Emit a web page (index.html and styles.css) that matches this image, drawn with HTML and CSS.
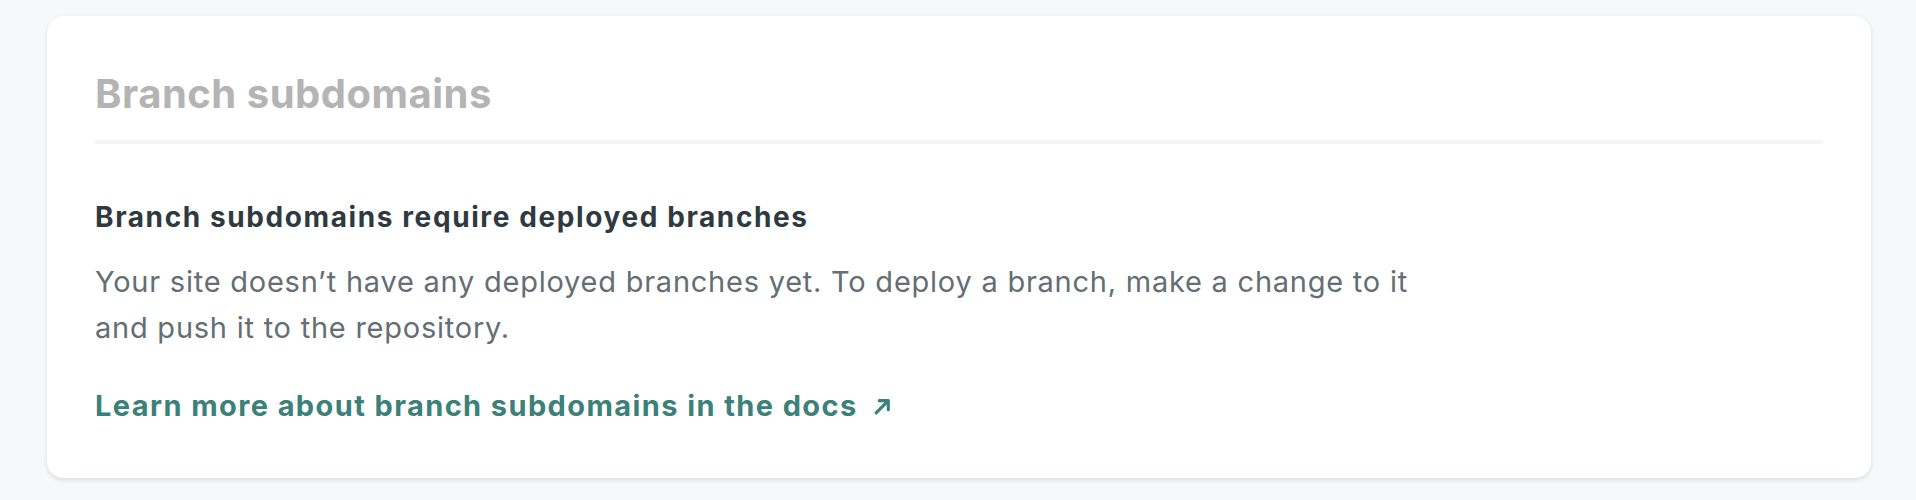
FILE: index.html
```html
<!DOCTYPE html>
<html lang="en">
<head>
<meta charset="utf-8">
<title>Branch subdomains</title>
<link rel="stylesheet" href="styles.css">
</head>
<body>
<main class="page">
  <section class="card">
    <header class="card-header">
      <h2 class="card-title">Branch subdomains</h2>
    </header>
    <div class="card-body">
      <h3 class="notice-title">Branch subdomains require deployed branches</h3>
      <p class="notice-text">Your site doesn’t have any deployed branches yet. To deploy a branch, make a change to it and push it to the repository.</p>
      <a class="docs-link" href="#">Learn more about branch subdomains in the docs<svg class="ext-icon" viewBox="0 0 18 18" width="19" height="19" aria-hidden="true"><path d="M3 15 L14.5 3.5 M6 3.5 H14.5 V12" fill="none" stroke="currentColor" stroke-width="3" stroke-linecap="round" stroke-linejoin="round"/></svg></a>
    </div>
  </section>
</main>
</body>
</html>
```

FILE: styles.css
```css
html, body {
  margin: 0;
  padding: 0;
}

body {
  background: #f6f9fa;
  font-family: Inter, "Noto Sans", "Liberation Sans", sans-serif;
  -webkit-font-smoothing: antialiased;
}

.page {
  padding: 16px 45px 20px 47px;
}

.card {
  background: #ffffff;
  border-radius: 16px;
  box-shadow: 0 2px 4px rgba(14, 30, 37, 0.12), 0 0 1px rgba(14, 30, 37, 0.06);
  padding: 54px 48px 52px;
}

.card-header {
  padding-bottom: 22px;
  border-bottom: 4px solid #f5f6f6;
}

.card-title {
  margin: 0;
  font-size: 40px;
  line-height: 48px;
  font-weight: 700;
  color: #b4b4b4;
  letter-spacing: 0.5px;
}

.card-body {
  display: flex;
  flex-direction: column;
  align-items: flex-start;
}

.notice-title {
  margin: 53px 0 0;
  font-size: 28px;
  line-height: 40px;
  font-weight: 700;
  letter-spacing: 1.6px;
  color: #2e3a40;
}

.notice-text {
  margin: 22px 0 0;
  max-width: 1340px;
  font-size: 29px;
  line-height: 46px;
  font-weight: 400;
  letter-spacing: 0.76px;
  color: #646e73;
}

.docs-link {
  margin-top: 35px;
  display: inline-flex;
  align-items: center;
  gap: 15px;
  font-size: 29px;
  line-height: 40px;
  font-weight: 700;
  letter-spacing: 1.4px;
  color: #3b8179;
  text-decoration: none;
}

.ext-icon {
  display: block;
  width: 19px;
  height: 19px;
}
```
